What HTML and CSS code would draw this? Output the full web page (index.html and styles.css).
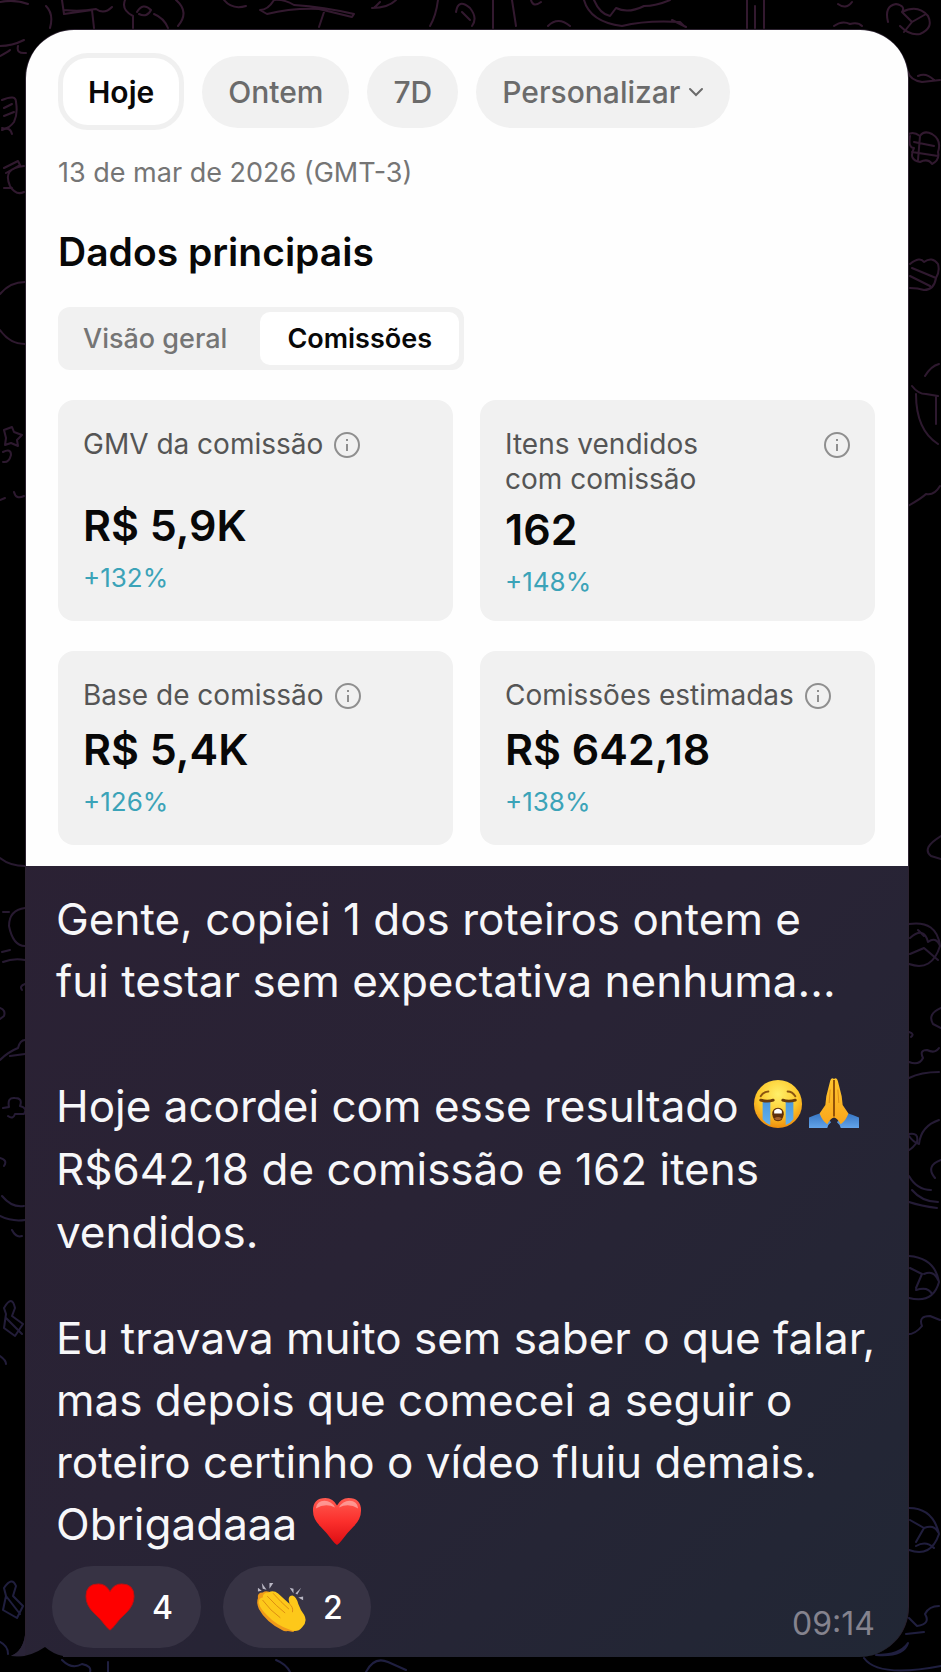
FILE: index.html
```
<!DOCTYPE html>
<html lang="pt-BR">
<head>
    <meta charset="UTF-8">
    <meta name="viewport" content="width=device-width, initial-scale=1.0">
    <title>Conversa</title>
    <link rel="stylesheet" href="styles.css">
</head>
<body>
    <svg class="wallpaper" viewBox="0 0 941 1672" preserveAspectRatio="xMidYMin slice" aria-hidden="true">
        <defs>
            <linearGradient id="doodle" gradientUnits="userSpaceOnUse" x1="0" y1="0" x2="0" y2="1672">
                <stop offset="0" stop-color="#33192f"/>
                <stop offset="0.5" stop-color="#28192f"/>
                <stop offset="1" stop-color="#1f1f40"/>
            </linearGradient>
        </defs>
        <g fill="none" stroke="url(#doodle)" stroke-width="2" stroke-linecap="round" stroke-linejoin="round">
            <!-- top strip -->
            <path d="M0 2q15-3 28 2M46 6q8 8 4 22M62 0l2 14l28-4l2 18M64 10q16 2 32-1q8 6 16-2M133 28v-12q-12-6-8-16M137 12q6-10 14-2q-4 8-12 4M154 14q10 4 14 14M176 0q14 12 2 26M224 0q8 10 22 6M260 10q8 0 14-10q10-1 20 5q30 2 60 9l-2 3l-33-8q-28-1-52 5zM325 9l-6 18M372 8q16 0 24-8M374 8l6-6"/>
            <path d="M438 0q-2 16-8 26M456 12q2-14 14-4q8 10 2 18M462 12l8 8M493 0v28M512 0l4 26M548 26q10-10 22 0M584 0q6 22 38 26q24-6 58-4l4 4M594 0q6 14 16 16l6-8q12 6 28-2q12 0 26-6M672 20l14 7M747 0v28M755 6v22M764 0v28M838 4q8 6 14-2M834 26q8-6 16-2q8-2 12 2M531 0q2 8 10 2"/>
            <!-- left edge -->
            <path d="M0 46q12 0 24-6M0 56q8-4 10-6M18 46q-2 8 8 7M2 100q14-6 14 2q2 12-2 20q-6 8-12 6M4 108l8-4M4 116l10-4M2 130q8-4 10 4M4 168l14-7l2 4l-14 8M24 166q-22 2-14 20q6 10 14 6M4 188h8M0 294q10-12 25-12M0 330q10 14 25 14"/>
            <path d="M4 430l8-3l2 5l8 3l-5 5l1 6l-7-3l-6 2l1-7zM3 452q8-4 8 3q-2 8-8 7M14 492q2 8 10 4M0 500l5-2M0 858q10 8 25 8M25 908q-16 2-16 18q4 20 16 20M3 912h6M2 952l8-2M3 962q10-4 22-2M25 984q-6 2-3 6M0 1008q6 2 4 8l-4 3M0 1060q8-8 18-12q2-8 7-8M25 1054l-15 2"/>
            <path d="M3 1108l6-1q-2-10 6-9q8 0 5 8q8 2 4 8q-6 0-9 0q-2 6-7 2M0 1158q8 2 4 8M2 1196q10 12 22 10M0 1216q12 6 25 4M12 1230q4 8 10 6M4 1308q8-14 11 0l-3 8l11 8l-8 12l-11-8l2-14zM6 1318l16 16M0 1356q6 4 6 8M4 1588q8-12 12-2l-3 10l10 10l-6 12l-14-8l3-14zM6 1596l14 18M0 1642q8 4 8 12"/>
            <!-- right edge -->
            <path d="M888 22q-4-16 8-18q10 2 6 8q16-8 26 4q6 12-8 18q-10 2-20-8M902 12l10 10l14-8M912 22l-8 10M908 72q2 8 14 10l18-2M918 76q8-4 16 4M910 136q-2 12 4 12q-6 12 6 14q8-4 12 2q8-4 6-12q4-12-6-18q-8-4-12 2q-8-6-14 0M914 142l20 4M912 152l26 4M920 136l-2 24"/>
            <path d="M910 264q10-8 14-2q8-6 14 2q2 8-2 14q-2 12-12 12q-6-2-14-2M912 268l24 10M910 276l20 10M925 376q6-10 14-12M912 386q6 8 14 8l12 2M916 394q0 36 22 50M936 396v28M908 506q14-8 18-12q8 2 14-8M941 836q-20 12-10 20l10 3M909 924q28-4 31 22q-8 26-31 18M910 938q14-12 18 4q8-6 12 4M910 954l14-6l14 12M918 930l6 6"/>
            <path d="M941 1008q-14 6-8 16l8 4M909 1032q6 2 2 5M909 1062q10 4 14-4q-4-8 4-8q8 4 12-2M909 1078q12-6 30-6M939 1120q-18 6-20 24q-6-2-10-8M909 1134q10-2 8 8q-4 6-8 8M941 1160q-16 6-6 18M909 1176q8 14 22 14M912 1190q10 12 26 12M909 1202q12 4 28 6M909 1256q26 2 30 26q-6 22-30 16M910 1268l12 6l-6 14M924 1274q10-4 14 6M916 1290q12-4 16 4M904 1334q10 2 18-8q-4-10 8-10l10 4"/>
            <path d="M909 1508q24 0 30 26q-8 24-30 16M910 1520l14 8l-8 14M924 1528q10-4 14 4M916 1546q10-6 18 2M909 1618l8 8q14-2 8-12q4-8 14-8M906 1634l18-2"/>
            <!-- bottom strip -->
            <path d="M62 1660q10 10 20 4q10 2 8 8M108 1662v10M276 1660q10 4 14 12M366 1672q8-16 22-10l18 8M864 1658q14 20 77 8M876 1655q24 0 32-12q-4 14-32 12"/>
        </g>
    </svg>

    <main class="chat">
        <article class="bubble">
            <section class="report">
                <div class="filters">
                    <button class="chip active">Hoje</button>
                    <button class="chip">Ontem</button>
                    <button class="chip">7D</button>
                    <button class="chip">Personalizar
                        <svg class="chevron" viewBox="0 0 16 10" aria-hidden="true"><path d="M2 2l6 6l6-6"/></svg>
                    </button>
                </div>
                <p class="date">13 de mar de 2026 (GMT-3)</p>
                <h1>Dados principais</h1>
                <div class="tabs">
                    <button class="tab">Visão geral</button>
                    <button class="tab active">Comissões</button>
                </div>
                <div class="cards">
                    <div class="card tall">
                        <div class="label">GMV da comissão
                            <svg class="info" viewBox="0 0 26 26" aria-hidden="true"><circle cx="13" cy="13" r="12"/><path d="M13 12v7M13 7v2"/></svg>
                        </div>
                        <div class="value">R$ 5,9K</div>
                        <div class="change">+132%</div>
                    </div>
                    <div class="card tall">
                        <div class="label spread"><span>Itens vendidos<br>com comissão</span>
                            <svg class="info" viewBox="0 0 26 26" aria-hidden="true"><circle cx="13" cy="13" r="12"/><path d="M13 12v7M13 7v2"/></svg>
                        </div>
                        <div class="value">162</div>
                        <div class="change">+148%</div>
                    </div>
                    <div class="card">
                        <div class="label">Base de comissão
                            <svg class="info" viewBox="0 0 26 26" aria-hidden="true"><circle cx="13" cy="13" r="12"/><path d="M13 12v7M13 7v2"/></svg>
                        </div>
                        <div class="value">R$ 5,4K</div>
                        <div class="change">+126%</div>
                    </div>
                    <div class="card">
                        <div class="label">Comissões estimadas
                            <svg class="info" viewBox="0 0 26 26" aria-hidden="true"><circle cx="13" cy="13" r="12"/><path d="M13 12v7M13 7v2"/></svg>
                        </div>
                        <div class="value">R$ 642,18</div>
                        <div class="change">+138%</div>
                    </div>
                </div>
            </section>

            <section class="message">
                <p>Gente, copiei 1 dos roteiros ontem e<br>fui testar sem expectativa nenhuma...</p>
                <p class="result">Hoje acordei com esse resultado <svg class="emoji" viewBox="0 0 52 52" role="img" aria-label="chorando">
                        <defs>
                            <radialGradient id="face" cx="0.5" cy="0.3" r="0.7">
                                <stop offset="0" stop-color="#fff06a"/>
                                <stop offset="0.6" stop-color="#fdc92c"/>
                                <stop offset="1" stop-color="#ef8d0c"/>
                            </radialGradient>
                            <linearGradient id="tear" x1="0" y1="0" x2="0" y2="1">
                                <stop offset="0" stop-color="#4a97dd"/>
                                <stop offset="1" stop-color="#62b2ee"/>
                            </linearGradient>
                        </defs>
                        <circle cx="26" cy="27" r="25" fill="url(#face)"/>
                        <path d="M10 24h8v25q-5-2-8-6zM34 24h8v19q-3 4-8 6z" fill="url(#tear)"/>
                        <path d="M8 23q7 2 13 0M31 23q6 2 13 0" fill="none" stroke="#6b3c0a" stroke-width="3" stroke-linecap="round"/>
                        <path d="M8 19q3-5 8-5M44 19q-3-5-8-5" fill="none" stroke="#8a5410" stroke-width="2" stroke-linecap="round"/>
                        <path d="M26 31q6 0 6 7q-1 7-6 7t-6-7q0-7 6-7z" fill="#5e2f0c"/>
                        <path d="M22 34q4-4 8 0v3h-8z" fill="#fff"/>
                        <path d="M22 42q4-3 8 0q-4 4-8 0z" fill="#a5602c"/>
                    </svg><svg class="emoji" viewBox="0 0 52 52" role="img" aria-label="mãos juntas">
                        <defs>
                            <linearGradient id="hand" x1="0" y1="0" x2="0" y2="1">
                                <stop offset="0" stop-color="#ffc62e"/>
                                <stop offset="1" stop-color="#f9a61c"/>
                            </linearGradient>
                            <linearGradient id="sleeve" x1="0" y1="0" x2="0" y2="1">
                                <stop offset="0" stop-color="#3574c2"/>
                                <stop offset="1" stop-color="#63a4ea"/>
                            </linearGradient>
                        </defs>
                        <path d="M0 41q8-3 14-5l9 10q-3 2-4 6h-19zM52 41q-8-3-14-5l-9 10q3 2 4 6h19z" fill="url(#sleeve)"/>
                        <path d="M26 1q-3-2-4 2l-4 16l-1 9l-6 9q3 8 8 11q3-6 7-7q4 1 7 7q5-3 8-11l-6-9l-1-9l-4-16q-1-4-4-2z" fill="url(#hand)"/>
                        <path d="M26 2v38" fill="none" stroke="#8f4f08" stroke-width="2"/>
                        <path d="M22 12l-1 14M30 12l1 14" fill="none" stroke="#dd8e18" stroke-width="1"/>
                    </svg><br>R$642,18 de comissão e 162 itens<br>vendidos.</p>
                <p>Eu travava muito sem saber o que falar,<br>mas depois que comecei a seguir o<br>roteiro certinho o vídeo fluiu demais.<br>Obrigadaaa <svg class="emoji" viewBox="0 0 52 52" role="img" aria-label="coração">
                        <defs>
                            <linearGradient id="heart" x1="0" y1="0" x2="0" y2="1">
                                <stop offset="0" stop-color="#ff5a50"/>
                                <stop offset="0.5" stop-color="#fb2f2c"/>
                                <stop offset="1" stop-color="#dc0d12"/>
                            </linearGradient>
                        </defs>
                        <path d="M26 51q-2-1-5-5q-5-7-12-14q-8-8-8-17q0-13 13-13q8 0 12 8q4-8 12-8q13 0 13 13q0 9-8 17q-7 7-12 14q-3 4-5 5z" fill="url(#heart)"/>
                        <path d="M4 13q1-8 9-8q7 0 11 7q-10-5-20 1zM28 12q4-7 11-7q8 0 9 8q-10-6-20-1z" fill="#fff" opacity="0.4"/>
                    </svg></p>
                <footer>
                    <button class="reaction">
                        <svg class="emoji" viewBox="0 0 52 52" role="img" aria-label="coração"><path d="M26 50q-2-1-5-5q-5-7-12-13q-8-8-8-17q0-13 13-13q8 0 12 8q4-8 12-8q13 0 13 13q0 9-8 17q-7 6-12 13q-3 4-5 5z" fill="#fe0000" stroke="#c01010" stroke-width="1"/></svg>
                        <span>4</span>
                    </button>
                    <button class="reaction">
                        <svg class="emoji" viewBox="0 0 52 52" role="img" aria-label="palmas">
                            <path d="M2 17q-1-6 5-6q4-3 10 1l26 30l-4 10l-6-1q-3 1-6-1q-17-9-24-22q-3-7-1-11z" fill="#ef9a1a"/>
                            <path d="M3 22q-1-5 4-6q0-5 6-5q5-3 10 1l12 11q-3-9 3-9q4 1 6 9q2 6 6 11q4 7-2 13q-5 6-12 3q-15-5-25-16q-7-7-8-12z" fill="#fdc81a"/>
                            <path d="M7 19q8 11 18 18M12 15q9 10 18 17M18 12q8 9 16 16M35 23q4 3 3 8" fill="none" stroke="#dd8b12" stroke-width="1" stroke-linecap="round"/>
                            <path d="M2 6l4 3l-4 1zM6 1l5 7l-4-1zM14 1h4l-4 6zM35 6l4 1l0 5zM47 6l-4 7l-2-1zM49 15l0 4l-5-3z" fill="#b9b7c4"/>
                        </svg>
                        <span>2</span>
                    </button>
                    <time>09:14</time>
                </footer>
            </section>
            <svg class="tail" viewBox="0 0 52 40" aria-hidden="true">
                <path d="M14 0v18q-2 16-14 21l14 1z" fill="#2a2438"/>
                <path d="M0 40q18 1 34-10q8 7 18 9v1z" fill="#000"/>
                <path d="M14 18q-2 16-14 21q9 0 15-2z" fill="#2a2438"/>
            </svg>
        </article>
    </main>
</body>
</html>
```
FILE: styles.css
```
* {
    box-sizing: border-box;
}
body {
    margin: 0;
    min-height: 100vh;
    background-color: #000;
    font-family: Inter, "Liberation Sans", sans-serif;
    position: relative;
    overflow-x: hidden;
}
button {
    font-family: inherit;
    border: none;
    margin: 0;
    cursor: pointer;
}
p, h1 {
    margin: 0;
}
.wallpaper {
    position: absolute;
    top: 0;
    left: 0;
    width: 100%;
    height: 100%;
}
.chat {
    position: relative;
    padding: 29px 32px 14px 25px;
}
.bubble {
    position: relative;
    border: 1px solid #2c2230;
    border-bottom: none;
    border-radius: 50px 50px 50px 0;
    background: linear-gradient(135deg, #2b2033 20%, #292335 62%, #212735 100%);
}
.report {
    background-color: #fefefe;
    border-radius: 48px 48px 0 0;
    padding: 23px 33px 21px 32px;
}

/* period filters */
.filters {
    display: flex;
    align-items: center;
    gap: 18px;
}
.chip {
    display: flex;
    align-items: center;
    gap: 8px;
    height: 72px;
    padding: 0 26px;
    border-radius: 36px;
    background-color: #f1f1f1;
    color: #6b6b6b;
    font-size: 30px;
    font-weight: 500;
}
.chip.active {
    height: 77px;
    padding: 0 25px;
    border: 5px solid #f0f0f0;
    border-radius: 30px;
    background-color: #fff;
    color: #080808;
    font-weight: 600;
}
.chevron {
    width: 16px;
    height: 10px;
    fill: none;
    stroke: #6b6b6b;
    stroke-width: 2;
    stroke-linecap: round;
}
.date {
    margin-top: 25px;
    font-size: 27px;
    line-height: 36px;
    color: #757575;
}
h1 {
    margin-top: 35px;
    font-size: 39px;
    line-height: 52px;
    font-weight: 600;
    color: #080808;
}

/* tabs */
.tabs {
    display: inline-flex;
    margin-top: 29px;
    padding: 5px;
    border-radius: 12px;
    background-color: #f1f1f1;
}
.tab {
    height: 53px;
    padding: 0 33px 0 20px;
    border-radius: 10px;
    background: none;
    font-size: 27px;
    font-weight: 500;
    color: #757575;
}
.tab.active {
    padding: 0 27px;
    background-color: #fff;
    color: #080808;
    font-weight: 600;
}

/* metric cards */
.cards {
    display: grid;
    grid-template-columns: 1fr 1fr;
    gap: 30px 27px;
    margin-top: 30px;
}
.card {
    display: flex;
    flex-direction: column;
    padding: 27px 25px 18px;
    border-radius: 16px;
    background-color: #f1f1f1;
}
.card.tall {
    padding-bottom: 14px;
}
.label {
    display: flex;
    align-items: flex-start;
    gap: 11px;
    margin-bottom: 8px;
    font-size: 28px;
    line-height: 35px;
    color: #555;
    white-space: nowrap;
}
.tall .label {
    min-height: 70px;
    margin-bottom: 0;
}
.tall .label.spread {
    justify-content: space-between;
    margin-bottom: 4px;
}
.info {
    flex: none;
    width: 26px;
    height: 26px;
    margin-top: 5px;
    fill: none;
    stroke: #8f8f8f;
    stroke-width: 2;
}
.value {
    font-size: 43px;
    line-height: 56px;
    font-weight: 600;
    color: #080808;
}
.change {
    font-size: 26px;
    line-height: 50px;
    color: #3ba3b8;
}

/* message text */
.message {
    padding: 22px 30px 9px;
    color: #f7f7f9;
    font-size: 44px;
    line-height: 62px;
}
.message p {
    white-space: nowrap;
}
.message .result {
    margin: 63px 0 43px;
    line-height: 63px;
}
.emoji {
    width: 50px;
    height: 50px;
    margin-left: 2px;
    vertical-align: -6px;
}
.emoji + .emoji {
    margin-left: 6px;
}
footer {
    display: flex;
    align-items: center;
    gap: 22px;
    margin: 11px 3px 0 -4px;
}
.reaction {
    display: flex;
    align-items: center;
    gap: 17px;
    height: 82px;
    padding: 0 28px 0 31px;
    border-radius: 41px;
    background-color: #373344;
    color: #fff;
    font-size: 32px;
    font-weight: 500;
}
time {
    align-self: flex-end;
    margin-left: auto;
    font-size: 32px;
    line-height: 48px;
    color: #85838e;
}
.tail {
    position: absolute;
    left: -15px;
    bottom: 0;
    width: 52px;
    height: 40px;
}
```
